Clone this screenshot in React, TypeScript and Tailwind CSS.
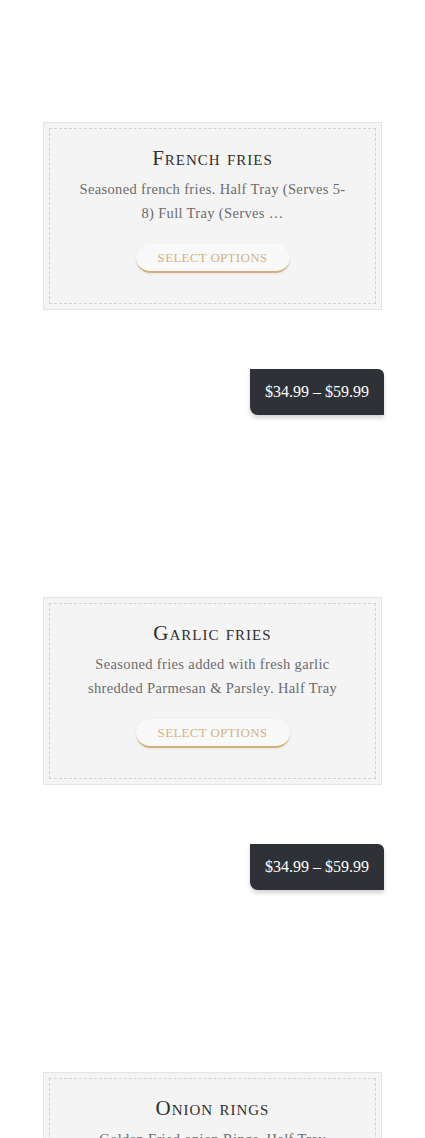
const products = [
  { name: 'French fries', desc: 'Seasoned french fries. Half Tray (Serves 5-\u200B8) Full Tray (Serves …', price: '$34.99 – $59.99' },
  { name: 'Garlic fries', desc: 'Seasoned fries added with fresh garlic shredded Parmesan & Parsley. Half Tray', price: '$34.99 – $59.99' },
  { name: 'Onion rings', desc: 'Golden Fried onion Rings. Half Tray (Serves\u00A05-8) Full Tray (Serves …', price: '$34.99 – $59.99' },
];

function ProductCard({ name, desc, price }: { name: string; desc: string; price: string }) {
  return (
    <div className="mb-[182px]">
      <div className="mx-[43px] border border-[#e4e4e4] bg-[#f4f4f4] p-[5px]">
        <div className="flex flex-col items-center border border-dashed border-[#d2d2d2] px-[26px] pt-[17px] pb-[30px] text-center">
          <h3 className="text-[21px] leading-[24px] tracking-[1px] text-[#2f2f2f] [font-variant:small-caps] [font-family:'Liberation_Serif',serif]">
            {name}
          </h3>
          <p className="mt-[7px] text-[14.5px] leading-[24px] tracking-[0.35px] text-[#6b6b6b] [font-family:'Liberation_Serif',serif]">
            {desc}
          </p>
          <button className="mt-[19px] h-[29px] w-[154px] rounded-full border-b-2 border-[#d3b07a] bg-[#f9f9f9] text-[13px] tracking-[0.3px] text-[#d2b383] shadow-[0_1px_3px_rgba(0,0,0,0.06)] [font-family:'Liberation_Serif',serif]">
            SELECT OPTIONS
          </button>
        </div>
      </div>
      <div className="mt-[59px] flex justify-end pr-[41px]">
        <div className="flex h-[46px] w-[134px] items-center justify-center rounded-tr-[6px] rounded-bl-[8px] bg-[#2e3136] text-[16px] text-white shadow-[0_3px_4px_rgba(0,0,0,0.18)] [font-family:'Liberation_Serif',serif]">
          {price}
        </div>
      </div>
    </div>
  );
}

export default function App() {
  return (
    <div className="min-h-screen bg-white pt-[122px]">
      {products.map(p => (
        <ProductCard key={p.name} {...p} />
      ))}
    </div>
  );
}
